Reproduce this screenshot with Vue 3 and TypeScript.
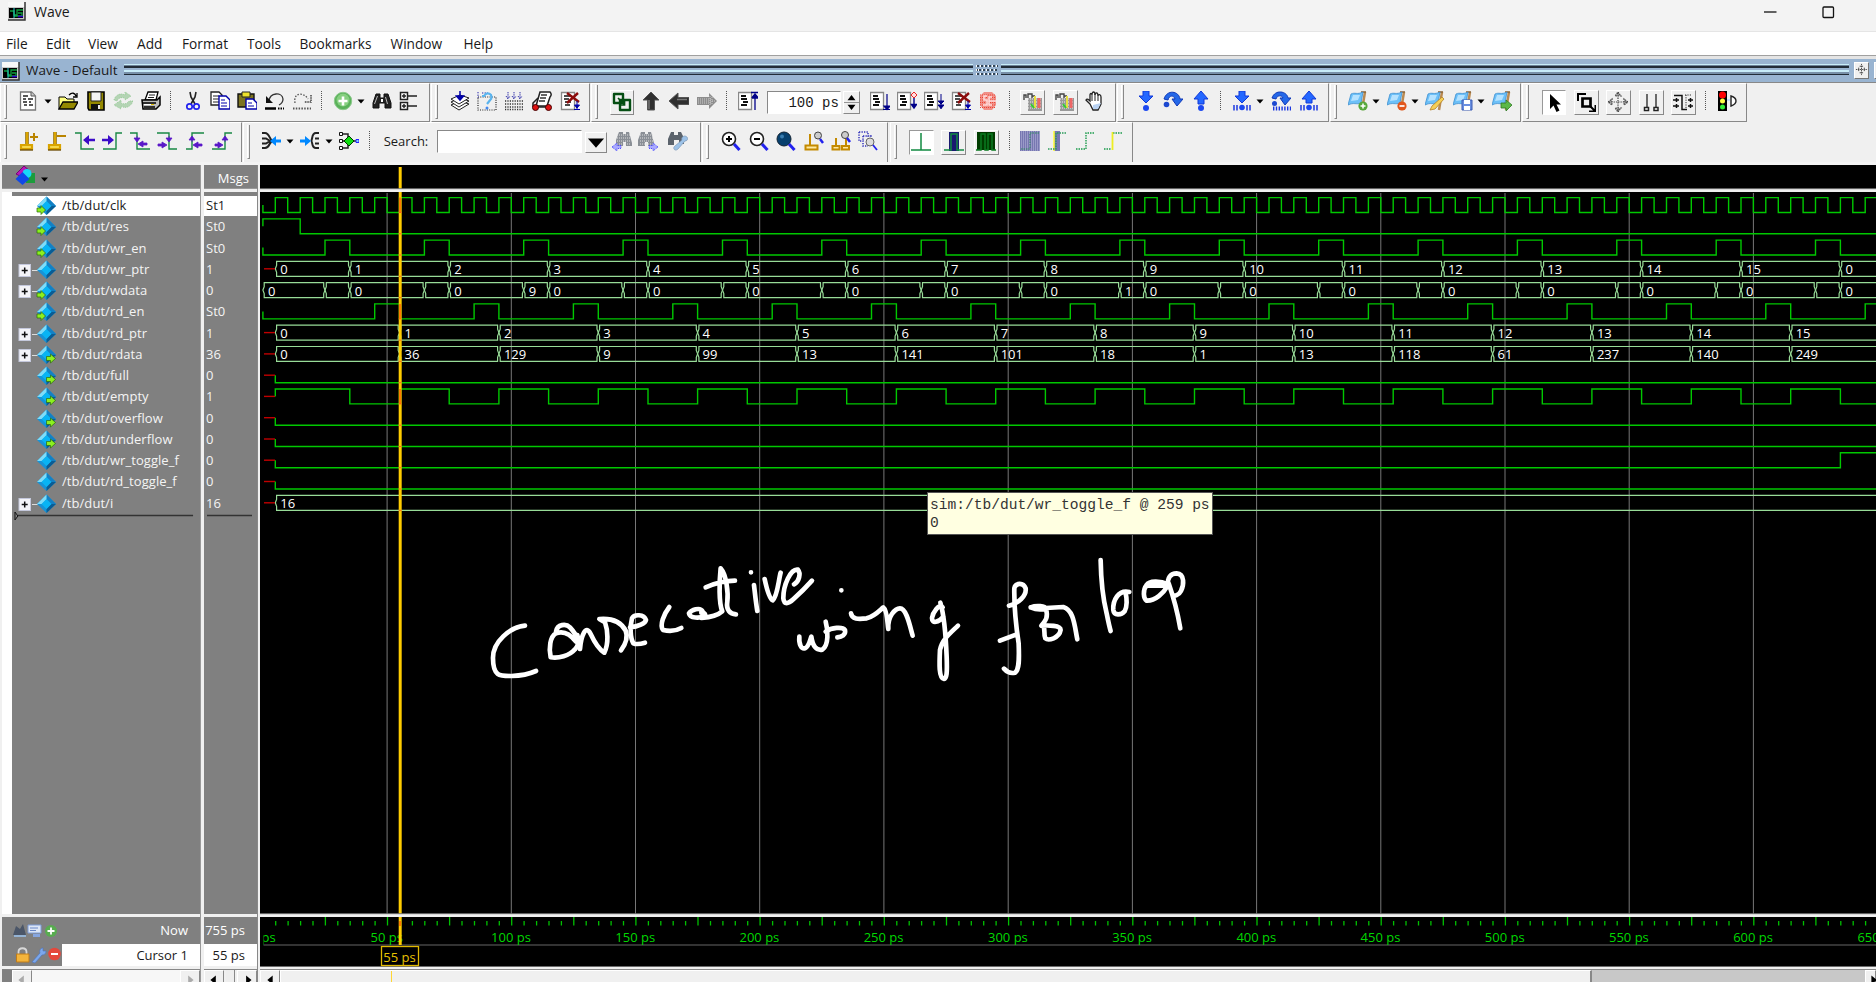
<script setup lang="ts">
type Item = { n: string; c: number; w: number; k?: string }
type Raw = [string, number, number?, string?]

const icons: Record<string, string> = {
  app: '<path d="M1 1h17v18H1z" fill="#c8c8c8"/><path d="M1 1h17v5H1z" fill="#f8f8f8"/><path d="M18 1v18H1" stroke="#333" stroke-width="1.5" fill="none"/><path d="M2 7h14v10H2z" fill="#000"/><path d="M3 10h4v4h3v-5h6M11 12h4v3h-8" stroke="#10a040" fill="none" stroke-width="1.3"/><path d="M7 7v10" stroke="#2cc"/><path d="M11 15.5h5" stroke="#30c" stroke-width="1.5"/>',
  down: '<path d="M6.5 8.500h7L10 12.500z" fill="#000"/>',
  new: '<path d="M2.500 1h11l4 4v14h-15z" fill="#fff" stroke="#777" stroke-width="1.3"/><path d="M13 1v4h4" fill="#ccc" stroke="#555"/><path d="M5 5h5M5 8h3m2 0h5M5 11h4m2 0h2M6 14h3m2 0h4" stroke="#222" stroke-width="1.6"/>',
  open: '<path d="M1 18V6h6l2 2h7v4" fill="#ffff80" stroke="#000"/><path d="M1 18l4-7h15l-4 7z" fill="#948800" stroke="#000" stroke-width="1.3"/><path d="M11 4c3-3 6-2 7 1m1-3v4h-4" stroke="#000" fill="none" stroke-width="1.3"/>',
  save: '<path d="M2 1h16v18H3l-1-2z" fill="#948800" stroke="#000" stroke-width="1.6"/><path d="M5 1h10v9H5z" fill="#f4f4f4" stroke="#222"/><path d="M5 13h9v6H5z" fill="#111"/><path d="M12 14h2v4h-2z" fill="#eee"/>',
  refresh: '<g fill="#b4d4b4" stroke="#9c9" stroke-dasharray="1 1"><path d="M1 9C3 3 8 2 12 4V1l6 4-6 4V7C8 6 5 7 4 10z"/><path d="M20 10c-2 6-8 8-12 5v3l-7-4 7-5v3c4 2 7 0 8-2z"/></g>',
  print: '<path d="M7 1h10l-2 8H4z" fill="#fff" stroke="#000" stroke-width="1.3"/><path d="M8 4h6M7 6.500h6" stroke="#222"/><path d="M1 9h15l3-3v8l-4 4H2z" fill="#bbb" stroke="#000" stroke-width="1.500"/><path d="M2 12h13M3 16h11" stroke="#000" stroke-width="1.5"/><path d="M3 13.500h10" stroke="#fff"/><path d="M10 13.500h3" stroke="#db0"/>',
  cut: '<path d="M7 1l1 5 4 7M13 1l-1 5-4 7" stroke="#222" stroke-width="1.6" fill="none"/><circle cx="6.500" cy="15.500" r="2.700" fill="none" stroke="#22e" stroke-width="1.700"/><circle cx="13.500" cy="15.500" r="2.700" fill="none" stroke="#22e" stroke-width="1.700"/>',
  copy: '<path d="M1 1h8l3 3v10H1z" fill="#fff" stroke="#222" stroke-width="1.300"/><path d="M3 5h6M3 8h6M3 11h6" stroke="#222"/><path d="M9 5h7l4 4v9H9z" fill="#fff" stroke="#00a" stroke-width="1.400"/><path d="M11 9h4M11 12h6M11 15h6" stroke="#00a"/>',
  paste: '<path d="M1 3h16v13H1z" fill="#7d7420" stroke="#111" stroke-width="1.400"/><path d="M5 1h8v5H5z" fill="#eee12c" stroke="#222"/><path d="M9 8h7l4 4v6H9z" fill="#fff" stroke="#00a" stroke-width="1.400"/><path d="M11 12h4M11 15h6" stroke="#00a"/>',
  undo: '<path d="M4 10C5 1 17 1 18 8c0 4-2 5-4 6" stroke="#333" fill="none" stroke-width="1.300"/><path d="M1 5v7h7z" fill="#111"/><path d="M0 17.500h11" stroke="#000" stroke-width="2.500"/><path d="M13 17.500h6" stroke="#000" stroke-width="2" stroke-dasharray="1.5 1"/>',
  redo: '<path d="M3 12C1 1 12 1 16 8" stroke="#555" fill="none" stroke-width="1.300" stroke-dasharray="1.5 1.5"/><path d="M19 4v7h-7" stroke="#444" fill="none" stroke-dasharray="1.500 .8" stroke-width="1.500"/><path d="M1 17.500h18" stroke="#555" stroke-width="1.800" stroke-dasharray="1.5 1.3"/>',
  plus: '<circle cx="10" cy="10" r="8.700" fill="#59b159" stroke="#8cc98c"/><circle cx="10" cy="9" r="6.500" fill="#86cf80"/><path d="M10 5.500v9M5.500 10h9" stroke="#fff" stroke-width="2.600"/>',
  binoc: '<path d="M4 3h4v4h4V3h4l3 9v5h-6v-5H7v5H1v-5z" fill="#222" stroke="#111"/><path d="M5.500 5l-3 8M13.500 6l2 7" stroke="#bbb"/><path d="M9 8h2v3H9z" fill="#fff"/>',
  tree: '<path d="M1.500 1.500h7v7h-7zM1.500 11.500h7v7h-7z" fill="#fff" stroke="#222" stroke-width="1.500"/><path d="M5 3v4M3 5h4M5 13v4M3 15h4M9 5h9M9 15h9" stroke="#222" stroke-width="1.400"/>',
  layers: '<path d="M1 14l9-4 9 3-10 6z" fill="#fff" stroke="#222"/><path d="M1 11l9-4 9 3-10 6z" fill="#fff" stroke="#222"/><path d="M1 8l9-4 9 3-10 6z" fill="#fff" stroke="#222"/><path d="M10 0v8M6.500 5l3.500 4 3.500-4z" stroke="#00a" fill="#00a" stroke-width="1.500"/>',
  dquest: '<path d="M1 6h18v13H1z" fill="none" stroke="#222" stroke-width="1.200" stroke-dasharray="1 1.300"/><path d="M1 1v6M5 2h6" stroke="#22a" stroke-dasharray="1.300 1.300"/><path d="M5 5h3M7 5c3-5 9-2 7 3l-4 5" stroke="#5ab4ee" fill="none" stroke-width="2.200"/><circle cx="10" cy="17" r="1.500" fill="#48e"/>',
  dots: '<path d="M1 10h18M1 13h18M1 16h18M1 18.500h18" stroke="#333" stroke-width="1.300" stroke-dasharray="1.200 1.200"/><path d="M4 1v6M10 1v6M16 1v6M2 5l2 3 2-3M8 5l2 3 2-3M14 5l2 3 2-3" fill="none" stroke="#33a" stroke-dasharray="1.400 .8"/>',
  cart: '<path d="M8 1h10c2 2 1 4 0 5l-3 9H4z" fill="#fff" stroke="#222" stroke-width="1.500"/><path d="M9 4h6M8 7h6M7 10h6" stroke="#333" stroke-width="1.300"/><path d="M1 16v-4l5-5M4 16h12" stroke="#222" stroke-width="1.500" fill="none"/><circle cx="3.500" cy="16.500" r="3" fill="#d11" stroke="#400"/><circle cx="16.500" cy="16.500" r="3" fill="#d11" stroke="#400"/>',
  docx: '<path d="M1.500 1.500h13v17h-13z" fill="#fff" stroke="#888" stroke-width="1.300"/><path d="M4 5h7M4 8h5M5 11h6M5 14h5" stroke="#111" stroke-width="1.700"/><path d="M7 2l12 9M18 2L7 12" stroke="#8b0c0c" stroke-width="2.400"/><path d="M17 10v8M14.500 14l2.500 3 2.500-3zM14 18.500h6" stroke="#00a" fill="#00a"/>',
  link: '<path d="M2 2h9v9H2zM8 8h10v10H8z" fill="none" stroke="#064f14" stroke-width="2.400" stroke-linejoin="round"/><path d="M6 6l6 6M12.500 8v5H8" stroke="#064f14" stroke-width="1.700" fill="none"/>',
  up: '<path d="M10 1l8 8h-4.500v10h-7V9H2z" fill="#303030" stroke="#555"/><path d="M8 9v9" stroke="#777" stroke-width="1.500"/>',
  left: '<path d="M0 10l9-8v4.500h11v7H9V18z" fill="#303030" stroke="#555"/><path d="M8 8.500h10" stroke="#777" stroke-width="1.500"/>',
  right: '<path d="M20 10l-8-8v4H0v8h12v4z" fill="#8c8c8c"/><path d="M1 8h13M1 10h17M1 12h13M13 5v10M15 6v8" stroke="#ccc" stroke-dasharray="1 1"/>',
  doctop: '<path d="M.500 1.500h13v17h-13z" fill="#fff" stroke="#888" stroke-width="1.300"/><path d="M3 5h5M3 8h6M5 11h5M3 14h6" stroke="#111" stroke-width="1.800"/><path d="M17 3v16M13 1.500h7M14 7h6M14.500 6L17 3l2.500 3z" stroke="#008" fill="#008" stroke-width="1.300"/>',
  docrun: '<path d="M.500 1.500h13v17h-13z" fill="#fff" stroke="#888" stroke-width="1.300"/><path d="M3 5h5M3 8h6M5 11h5M3 14h6" stroke="#111" stroke-width="1.800"/><path d="M17 3v15M14 15l3 3.500 3-3.500zM13 18.500h7" stroke="#008" fill="#008" stroke-width="1.200"/>',
  docred: '<path d="M.500 1.500h13v17h-13z" fill="#fff" stroke="#888" stroke-width="1.300"/><path d="M3 5h5M3 8h6M5 11h5M3 14h6" stroke="#111" stroke-width="1.800"/><path d="M17 6v11M14.500 13.500l2.500 3.500 2.500-3.500z" stroke="#008" fill="#008" stroke-width="1.400"/><path d="M17 1l3 3-3 3-3-3z" fill="#fdd" stroke="#e22"/>',
  docall: '<path d="M.500 1.500h13v17h-13z" fill="#fff" stroke="#888" stroke-width="1.300"/><path d="M3 5h5M3 8h6M5 11h5M3 14h6" stroke="#111" stroke-width="1.800"/><path d="M17 3v15M14 10l3 3 3-3zM14 14l3 3.500 3-3.500z" stroke="#008" fill="#008" stroke-width="1"/>',
  stop: '<path d="M6 1h8l4 4v9l-4 5H6l-4-5V5z" fill="#f09088"/><path d="M2 4h16M2 6.500h16M2 9h16M2 11.500h16M2 14h16M2 16.500h16" stroke="#e43" stroke-dasharray="1 1"/><path d="M9 5H6v4h3v5H5M14 6h-3v8h3M11 10h7" stroke="#fdd" fill="none" stroke-width="1.500"/>',
  prof: '<path d="M5 6h14v13H5z" fill="#999"/><path d="M5 7h14M5 10h14M5 13h14M5 16h14" stroke="#eee" stroke-dasharray="1 1"/><path d="M1 8V3h2v3M5 6V2h4v4M9 4h3" stroke="#444" stroke-width="1.400" fill="none"/><path d="M12 4v12" stroke="#e8e040" stroke-width="2"/><path d="M16 6v10" stroke="#e66" stroke-width="3"/><path d="M8 12l3 4" stroke="#3c3" stroke-width="2"/>',
  hand: '<path d="M5 13L1 9c1-2 3 0 4 1V4c0-2 2-2 2 0 0-4 3-4 3 0 0-3 3-3 3 1 0-2 3-2 3 1v7l-3 6H8z" fill="#fff" stroke="#222" stroke-width="1.300"/><path d="M7 4v6M10 3v7M13 5v5" stroke="#222"/><path d="M8 14l8-2-3 6H8z" fill="#b9d2f2"/>',
  stepin: '<path d="M7 0h6v5h4L10 12 3 5h4z" fill="#2468ff" stroke="#1038d8"/><circle cx="10" cy="17" r="3" fill="#1c48f0"/>',
  stepover: '<path d="M1 8C4-2 16 0 17 8h3l-6 7-5-7h3C11 4 6 4 5 9z" fill="#2468e8" stroke="#1038b8"/><circle cx="3.500" cy="13.500" r="2.800" fill="#1c48d0"/>',
  stepout: '<path d="M7 13V8H3l7-8 7 8h-4v5z" fill="#2468ff" stroke="#1038d8"/><circle cx="10" cy="17" r="3" fill="#1c48f0"/>',
  stepin2: '<path d="M7 0h6v5h4L10 12 3 5h4z" fill="#2468ff" stroke="#1038d8"/><circle cx="10" cy="16.500" r="2.800" fill="#1c48f0"/><path d="M2 14v5.500M5 14v5.500M15 14v5.500M18 14v5.500" stroke="#1c38e0" stroke-width="1.500"/>',
  stepover2: '<path d="M1 7C4-2 16 0 17 7h3l-6 7-5-7h3C11 4 6 4 5 8z" fill="#2468e8" stroke="#1038b8"/><circle cx="3.500" cy="12.500" r="2.500" fill="#1c48d0"/><path d="M2 17.500h18" stroke="#1c38e0" stroke-width="4" stroke-dasharray="1.400 1.400"/>',
  stepout2: '<path d="M7 12V8H3l7-8 7 8h-4v4z" fill="#2468ff" stroke="#1038d8"/><circle cx="10" cy="16.500" r="2.800" fill="#1c48f0"/><path d="M2 14v5.500M5 14v5.500M15 14v5.500M18 14v5.500" stroke="#1c38e0" stroke-width="1.500"/>',
  arrow: '<path d="M6 2v15l3.500-3.500 3 6.500 3-1.500-3-6H17z" fill="#000"/>',
  zoomsel: '<path d="M2 9V2h8" stroke="#000" stroke-width="2" fill="none"/><path d="M6.500 6.500h8v8h-8z" fill="none" stroke="#000" stroke-width="2.700"/><path d="M14 14l5 5M19.500 13v6.500H13" stroke="#000" stroke-width="2" fill="none"/>',
  pan: '<path d="M10 1v18M1 10h18M10 0l3 4H7zM10 20l3-4H7zM0 10l4-3v6zM20 10l-4-3v6z" fill="#aaa" stroke="#444" stroke-width="1.200" stroke-dasharray="1.300 1"/>',
  twocur: '<path d="M6 2v14M15 2v14" stroke="#222" stroke-width="1.300"/><path d="M3.500 15.500h4v3h-4zM13 15.500h4v3h-4z" fill="#fff" stroke="#222" stroke-width="1.500"/>',
  editw: '<path d="M1 3.500h8v14h5" stroke="#111" stroke-width="1.500" fill="none"/><path d="M12 3h7M13 16V3" stroke="#333" stroke-dasharray="1.200 1.200"/><path d="M0 8h6M3.500 6v4M15 8h5M17.500 6v4M15 14h5M17.500 12v4M0 14h6M3.500 12v4" stroke="#111" stroke-width="1.500"/>',
  light: '<path d="M1 0h9v20H1z" fill="#000"/><circle cx="5.500" cy="4" r="3.500" fill="#f00"/><circle cx="5.500" cy="10" r="2.500" fill="#ff4"/><circle cx="5.500" cy="16" r="2.500" fill="#3e3"/><path d="M10 9h3" stroke="#9cf"/><path d="M14 5v10c3-1 5-3 5-5s-2-4-5-5z" fill="#fff" stroke="#222" stroke-width="1.400"/>',
  curadd: '<path d="M8 1v13" stroke="#8a6500" stroke-width="3.500"/><path d="M8 1v13M2 14h11v4H2z" stroke="#d9a400" stroke-width="2.200" fill="#f6d84c"/><path d="M1 19h13" stroke="#6a4a00" stroke-width="1.300"/><path d="M11 6h8M15 2v8" stroke="#b98400" stroke-width="2"/>',
  curdel: '<path d="M8 1v13" stroke="#8a6500" stroke-width="3.500"/><path d="M8 1v13M2 14h11v4H2z" stroke="#d9a400" stroke-width="2.200" fill="#f6d84c"/><path d="M1 19h13" stroke="#6a4a00" stroke-width="1.300"/><path d="M10 5h9" stroke="#b98400" stroke-width="2"/>',
  e1: '<path d="M0 2h6v16h13" stroke="#198844" fill="none" stroke-width="1.400"/><path d="M8 9l6-5v3.700h6v2.600h-6V14z" fill="#3c0cc8"/>',
  e2: '<path d="M20 2h-6v16H1" stroke="#198844" fill="none" stroke-width="1.400"/><path d="M12 9L6 4v3.700H0v2.600h6V14z" fill="#3c0cc8"/>',
  e3: '<path d="M0 2h7v16h13" stroke="#198844" fill="none" stroke-width="1.400"/><path d="M7 5v5M4 7l3 4 3-4zM8 13l5-3v2h4v2h-4v2z" fill="#5a18c8" stroke="#5a18c8" stroke-width=".8"/>',
  e4: '<path d="M0 2h12v16h8" stroke="#198844" fill="none" stroke-width="1.400"/><path d="M12 5v5M9 7l3 4 3-4zM10 14l-5-3v2H1v2h4v2z" fill="#5a18c8" stroke="#5a18c8" stroke-width=".8"/>',
  e5: '<path d="M1 18h6V2h12" stroke="#198844" fill="none" stroke-width="1.400"/><path d="M7 11V6M4 9l3-4 3 4zM8 14l5-3v2h4v2h-4v2z" fill="#5a18c8" stroke="#5a18c8" stroke-width=".8"/>',
  e6: '<path d="M0 18h13V2h7" stroke="#198844" fill="none" stroke-width="1.400"/><path d="M13 11V6M10 9l3-4 3 4zM11 14l-5-3v2H3v2h3v2z" fill="#5a18c8" stroke="#5a18c8" stroke-width=".8"/>',
  c1: '<path d="M1 2h3c5 0 4 7 8 8-4 0-3 7-8 7H1M1 7.500h4l4 2.500-4 2.500H1" stroke="#222" fill="none" stroke-width="2"/><path d="M9 10l6-5v3.500h5v3h-5V15z" fill="#08f"/>',
  c2: '<path d="M19 2h-3c-5 0-3 7-5 8 2 0 0 7 5 7h3M19 7.500h-4M19 12.500h-4" stroke="#222" fill="none" stroke-width="2"/><path d="M11 10L5 5v3.500H0v3h5V15z" fill="#08f"/>',
  c3: '<path d="M3 3h6v14H3M3 10h14" stroke="#222" stroke-width="1.500" fill="none"/><path d="M.500 1.500h3v3h-3zM.500 8.500h3v3h-3zM.500 15.500h3v3h-3z" fill="#fff" stroke="#111"/><path d="M10 5l5 5-5 5-5-5z" fill="#1d1" stroke="#030"/><path d="M17 8.500h3v3h-3z" fill="#8cf" stroke="#22f"/>',
  fprev: '<path d="M7 1h4v2h3V1h3l3 11v3h-6v-4h-3v4H4V9z" fill="#8a8f96"/><path d="M5 4h13M5 7h14M5 10h14M5 13h14" stroke="#ddd" stroke-dasharray="1 1"/><path d="M0 16l5-4v2.500h4v3H5V20z" fill="#aaf" stroke="#44f" stroke-dasharray="1 1"/>',
  fnext: '<path d="M3 1h4v2h3V1h3l3 11v3h-6v-4H7v4H0V9z" fill="#8a8f96"/><path d="M2 4h14M2 7h14M2 10h14M2 13h14" stroke="#ddd" stroke-dasharray="1 1"/><path d="M20 16l-5-4v2.500h-4v3h4V20z" fill="#aaf" stroke="#44f" stroke-dasharray="1 1"/>',
  fopt: '<path d="M3 1h3v3h4V1h3l3 6v6h-5V9H6v5H0V8z" fill="#5b636c"/><path d="M17 5c4 1 3 5 0 5l-7 8c-3 3-6-1-3-3l7-6c-1-2 1-4 3-4z" fill="#9cc2e8" stroke="#7f9ab8" stroke-width=".7"/>',
  zin: '<circle cx="8" cy="8" r="6.500" fill="#fff" stroke="#222" stroke-width="1.600"/><path d="M8 5v6M5 8h6" stroke="#000" stroke-width="2"/><path d="M13 13l5.500 6" stroke="#22e" stroke-width="3"/>',
  zout: '<circle cx="8" cy="8" r="6.500" fill="#fff" stroke="#222" stroke-width="1.600"/><path d="M5 8h6" stroke="#000" stroke-width="2"/><path d="M13 13l5.500 6" stroke="#22e" stroke-width="3"/>',
  zfull: '<circle cx="8" cy="8" r="7" fill="#07406e" stroke="#123"/><circle cx="6" cy="5.500" r="2" fill="#3a7db0"/><path d="M13 13l5.500 6" stroke="#22e" stroke-width="3"/>',
  zcur: '<path d="M6 3v11M1.500 14.500h12v4h-12z" stroke="#c48a00" stroke-width="2" fill="#ffe9a0"/><circle cx="14" cy="4.500" r="3.500" fill="#ccc" stroke="#444"/><path d="M16 8l3 4" stroke="#22e" stroke-width="2.500"/>',
  ztwo: '<path d="M5 7v8M15 7v8M1.500 15h7v3.500h-7zM11 15h7v3.500h-7z" stroke="#c48a00" stroke-width="2" fill="#ffe9a0"/><circle cx="14" cy="4" r="3.500" fill="#ccc" stroke="#444"/><path d="M16 7l3 4" stroke="#22e" stroke-width="2.500"/>',
  zrange: '<path d="M1 1h9v4h3M1 1v9h4v5h5M5 5h8v5M5 5v5" stroke="#33b" stroke-dasharray="1.300 1.200" fill="none" stroke-width="1.500"/><circle cx="12" cy="11" r="4" fill="#ddd" stroke="#666"/><path d="M15 14l4 5" stroke="#22e" stroke-width="1.800"/>',
  w1: '<path d="M0 18h20M10 1v17" stroke="#128a42" stroke-width="1.500"/>',
  w2: '<path d="M5 0h10v19H5z" fill="#191970"/><path d="M0 18h7V2h6v16h7" stroke="#128a42" fill="none" stroke-width="1.500"/>',
  w3: '<path d="M1 0h18v18H1z" fill="#003c00"/><path d="M0 18h5V2h4v16h3V2h4v16h4" stroke="#0a7a20" fill="none" stroke-width="1.500"/>',
  w4: '<path d="M0 0h20v20H0z" fill="#9a9ac8"/><path d="M0 1h20M0 3h20M0 5h20M0 7h20M0 9h20M0 11h20M0 13h20M0 15h20M0 17h20M0 19h20" stroke="#55559a" stroke-dasharray="1 1"/><path d="M1 18h9V2h9" stroke="#2a8a5a" fill="none" stroke-dasharray="1.500 1"/>',
  w5: '<path d="M6 0h6v20H6z" fill="#7777b4"/><path d="M6 0v20" stroke="#ff3" stroke-width="1.500"/><path d="M0 18h8V2h10" stroke="#2a9a5a" fill="none" stroke-width="1.400" stroke-dasharray="1.500 1"/>',
  w6: '<path d="M1 18h10V2h9" stroke="#1a9a4a" fill="none" stroke-width="1.400" stroke-dasharray="1.500 1"/>',
  w7: '<path d="M1 18h7M10 2h10" stroke="#1a9a4a" fill="none" stroke-width="1.400" stroke-dasharray="1.500 1"/><path d="M9.500 1v18" stroke="#ee2" stroke-width="1.800"/>'
}
const flag = '<path d="M17 1l-3 18" stroke="#b98a52" stroke-width="2.500"/><path d="M13 1h5" stroke="#8a6234" stroke-width="1.500"/><path d="M3 3c4-2 6 1 12-2l-2 11c-5 2-7-1-13 2z" fill="#6cc0f8" stroke="#3d8fd0" stroke-width=".8"/><path d="M5 4l7 0-2 5-7 1z" fill="#b5e2ff"/>'
icons.b1 = flag + '<circle cx="15" cy="15" r="4.600" fill="#57a83c"/><path d="M15 12.500v5M12.500 15h5" stroke="#fff" stroke-width="1.500"/>'
icons.b2 = flag + '<circle cx="15" cy="15" r="4.600" fill="#e2571c"/><path d="M12.500 15h5" stroke="#fff" stroke-width="1.700"/>'
icons.b3 = flag + '<path d="M17 6l2 2-9 10-5 1 2-4z" fill="#f5cf58" stroke="#b58324" stroke-width=".8"/>'
icons.b4 = flag + '<path d="M9 9h10v10H9z" fill="#6a8fe0" stroke="#3c5cb4"/><path d="M11 9h6v4h-6zM11 15h6v4h-6z" fill="#fff"/>'
icons.b5 = flag + '<path d="M9 12h5V9l6 5-6 6v-3H9z" fill="#5cb848" stroke="#2f7a22" stroke-width=".8"/>'

const bar = (start: number, end: number, raw: Raw[]) => {
  let pos = start + 10
  const items = raw.map(([n, c, w = n === 'down' ? 12 : n === 'sep' ? 2 : 20, k = 'icon']) => {
    const gap = c - w / 2 - pos
    pos = c + w / 2
    return { n, c, w, k: n === 'sep' ? 'sep' : k, gap } as Item & { gap: number }
  })
  return { width: end - start, items }
}
const row1 = [
  bar(0, 430, [['new', 27.500], ['down', 47.500], ['open', 68], ['save', 96], ['refresh', 123], ['print', 150.500], ['sep', 171], ['cut', 192.500], ['copy', 220], ['paste', 247], ['undo', 275], ['redo', 301.500], ['sep', 322], ['plus', 343], ['down', 361], ['binoc', 381.500], ['tree', 408.500]]),
  bar(431, 589.500, [['layers', 460], ['dquest', 487], ['dots', 514], ['cart', 542], ['docx', 569.500]]),
  bar(591, 1116, [['link', 622, 24, 'btn'], ['up', 651.500], ['left', 679.500], ['right', 707], ['sep', 727.500], ['doctop', 748], ['100 ps', 804, 74, 'time'], ['spin', 851.500, 17, 'spin'], ['docrun', 880], ['docred', 907], ['docall', 934], ['docx', 961.500], ['stop', 988], ['sep', 1010], ['prof', 1033, 25, 'btn'], ['prof', 1065.500, 25, 'btn'], ['hand', 1095]]),
  bar(1117, 1328.500, [['stepin', 1146], ['stepover', 1173], ['stepout', 1201], ['sep', 1221], ['stepin2', 1242], ['down', 1259.500, 10], ['stepover2', 1280.500], ['stepout2', 1308.500]]),
  bar(1330, 1521.500, [['b1', 1358], ['down', 1376], ['b2', 1397], ['down', 1415], ['b3', 1435.500], ['b4', 1463], ['down', 1481], ['b5', 1502]]),
  bar(1523, 1747.500, [['arrow', 1554.500, 24, 'btn on'], ['zoomsel', 1587, 25, 'btn'], ['pan', 1619, 25, 'btn'], ['twocur', 1652, 25, 'btn'], ['editw', 1684, 25, 'btn'], ['sep', 1707], ['light', 1727.500]])
]
const row2 = [
  bar(0, 242, [['curadd', 29], ['curdel', 56.500], ['e1', 85], ['e2', 112], ['e3', 140], ['e4', 167], ['e5', 195], ['e6', 222]]),
  bar(243, 701, [['c1', 271], ['down', 290], ['c2', 310], ['down', 329], ['c3', 349], ['sep', 370], ['Search:', 406.500, 46, 'label'], ['', 509.500, 145, 'field'], ['down', 595.500, 22, 'btn drop'], ['fprev', 622], ['fnext', 648], ['fopt', 678]]),
  bar(702, 888, [['zin', 731], ['zout', 759], ['zfull', 786], ['zcur', 814], ['ztwo', 841], ['zrange', 868]]),
  bar(889, 1132, [['w1', 920.500, 25, 'btn on'], ['w2', 953, 25, 'btn'], ['w3', 985.500, 25, 'btn'], ['sep', 1009], ['w4', 1029.500], ['w5', 1057], ['w6', 1084], ['w7', 1112]])
]
const menus = [['File', 40], ['Edit', 42], ['View', 49], ['Add', 45], ['Format', 65], ['Tools', 52.500], ['Bookmarks', 91], ['Window', 73], ['Help', 40]]

// kind: 0 internal, 1 input, 2 output
const signals: { n: string; v: string; kind: number; bus?: boolean }[] = [
  { n: 'clk', v: 'St1', kind: 1 }, { n: 'res', v: 'St0', kind: 1 }, { n: 'wr_en', v: 'St0', kind: 1 },
  { n: 'wr_ptr', v: '1', kind: 0, bus: true }, { n: 'wdata', v: '0', kind: 1, bus: true }, { n: 'rd_en', v: 'St0', kind: 1 },
  { n: 'rd_ptr', v: '1', kind: 0, bus: true }, { n: 'rdata', v: '36', kind: 2, bus: true }, { n: 'full', v: '0', kind: 2 },
  { n: 'empty', v: '1', kind: 2 }, { n: 'overflow', v: '0', kind: 2 }, { n: 'underflow', v: '0', kind: 2 },
  { n: 'wr_toggle_f', v: '0', kind: 0 }, { n: 'rd_toggle_f', v: '0', kind: 0 }, { n: 'i', v: '16', kind: 0, bus: true }
]

const END = 660
const X = (t: number) => +(262.9 + t * 2.4842).toFixed(1)
const hi = (r: number) => +(197.600 + r * 21.270).toFixed(1)
const lo = (r: number) => +(212.500 + r * 21.270).toFixed(1)
const mid = (r: number) => +(205 + r * 21.270).toFixed(1)
const range = (n: number) => Array.from({ length: n }, (_, i) => i)

function bit(row: number, from: number, level: number, edges: number[]) {
  let d = `M${X(from)} ${mid(row)}V${level ? hi(row) : lo(row)}`
  let l = level
  for (const t of edges) {
    l = 1 - l
    d += `H${X(t)}V${l ? hi(row) : lo(row)}`
  }
  return d + `H${X(END)}`
}
const bits = [
  bit(0, 0, 0, range(131).map(i => 5 + i * 5)),
  bit(1, 0, 1, [15]),
  bit(2, 0, 0, range(16).flatMap(i => [25 + 40 * i, 35 + 40 * i])),
  bit(5, 0, 0, range(16).flatMap(i => [45 + 40 * i, 55 + 40 * i])),
  bit(8, 5, 0, []),
  bit(9, 5, 1, range(16).flatMap(i => [35 + 40 * i, 55 + 40 * i]).filter(t => t < 650)),
  bit(10, 5, 0, []), bit(11, 5, 0, []), bit(12, 5, 0, [635]), bit(13, 5, 0, [])
]
type Seg = { row: number; a: number; b: number; v: string }
const segs: Seg[] = []
const addBus = (row: number, pts: [number, string][]) =>
  pts.forEach(([t, v], i) => segs.push({ row, a: t, b: i + 1 < pts.length ? pts[i + 1][0] : END, v }))
addBus(3, [[5, '0'], ...range(16).map(i => [35 + 40 * i, String((i + 1) % 16)] as [number, string])])
addBus(4, [[0, '0'], ...range(16).flatMap(i => [[25 + 40 * i, i === 2 ? '9' : i === 8 ? '1' : ''], [35 + 40 * i, '0']] as [number, string][])])
addBus(6, [[5, '0'], ...range(15).map(i => [55 + 40 * i, String(i + 1)] as [number, string])])
addBus(7, [[5, '0'], ...['36', '129', '9', '99', '13', '141', '101', '18', '1', '13', '118', '61', '237', '140', '249'].map((v, i) => [55 + 40 * i, v] as [number, string])])
addBus(14, [[5, '16']])
const segPath = (s: Seg) => {
  const a = X(s.a), b = X(s.b), h = hi(s.row), l = lo(s.row), m = mid(s.row)
  return `M${a + 1.3} ${h}H${b - 1.3}V${h + 4}L${b} ${m}L${b - 1.3} ${l - 4}V${l}H${a + 1.3}V${l - 4}L${a} ${m}L${a + 1.3} ${h + 4}Z`
}
const unknown = [3, 6, 7, 8, 9, 10, 11, 12, 13, 14]
const grid = range(12).map(i => 50 + i * 50)
const ticks = range(130).map(i => 5 + i * 5)
const labels = range(13).map(i => 50 + i * 50)
</script>

<template>
  <div class="win">
    <header class="titlebar">
      <svg class="ic20" viewBox="0 0 20 20" v-html="icons.app" />
      <span class="wtitle">Wave</span>
      <svg class="winbtns" viewBox="0 0 90 32"><path d="M0 11h12.500" /><rect x="59" y="6" width="10.500" height="10.500" rx="1" /></svg>
    </header>
    <nav class="menu"><span v-for="m in menus" :key="m[0]" :style="{ width: m[1] + 'px' }">{{ m[0] }}</span></nav>
    <div class="pane">
      <svg class="ic20" viewBox="0 0 20 20" v-html="icons.app" />
      <span class="ptitle">Wave - Default</span>
      <div class="grip l" />
      <div class="dots"><i v-for="n in 3" :key="n" /></div>
      <div class="grip r" />
      <div class="pbtn"><svg viewBox="0 0 14 14"><path d="M7 1v12M1 7h12M4 5v4M10 5v4M5 3.500h4M5 10.500h4" stroke="#444" stroke-dasharray="1.500 .7" /></svg></div>
      <div class="pbtn last" />
    </div>
    <div v-for="(row, ri) in [row1, row2]" :key="ri" class="bars">
      <div v-for="(g, gi) in row" :key="gi" class="bar" :style="{ width: g.width + 'px' }">
        <div class="handle" />
        <div v-for="(it, i) in g.items" :key="i" :class="it.k" :style="{ width: it.w + 'px', marginLeft: it.gap + 'px' }">
          <template v-if="it.k === 'time' || it.k === 'label'">{{ it.n }}</template>
          <template v-else-if="it.k === 'spin'">
            <svg viewBox="0 0 17 22"><path d="M4 8.500h9L8.500 2.500zM4 13.500h9l-4.500 6z" /><path d="M0 11h17" stroke="#888" /></svg>
          </template>
          <svg v-else-if="icons[it.n]" class="ic20" viewBox="0 0 20 20" v-html="icons[it.n]" />
        </div>
      </div>
    </div>
    <main class="wave">
      <section class="names">
        <div class="head">
          <svg class="filter" viewBox="0 0 34 24">
            <path d="M2 9l8-8 7 6-3 4-4-4-4 4z" fill="#b818b8" stroke="#707" /><path d="M12 8h9v10h-9z" fill="#1c9c3c" /><circle cx="13" cy="8.500" r="4.500" fill="#18d8f8" /><path d="M8.500 7l7 7-7 6-7-6z" fill="#1048e8" /><path d="M27 12.500h7l-3.500 4z" fill="#000" />
          </svg>
        </div>
        <div class="list">
          <div v-for="(s, i) in signals" :key="s.n" class="sig" :class="{ sel: i === 0 }">
            <svg class="node" viewBox="0 0 46 22">
              <g v-if="s.bus"><path d="M14 11.500h12" stroke="#ddd" /><rect x="1" y="5.500" width="11.500" height="12" fill="#f4f4f8" stroke="#c4c8dc" /><path d="M6.700 8.500v6M3.700 11.500h6" stroke="#111" stroke-width="1.500" /></g>
              <path d="M28.500 1.500L38 11l-9.500 9L19 11z" fill="#1793d6" /><path d="M28.500 1.500L38 11l-5 .5-4.500-5z" fill="#1380c4" /><path d="M38 11l-9.500 9v-4l4.500-5z" fill="#0a5c94" /><path d="M28.500 1.500L19 11h5l4.500-4.500z" fill="#7fdcf8" /><path d="M28.500 6l5 5-5 5-5-5z" fill="#08b4f4" />
              <path v-if="s.kind === 1" d="M19 13h4v-2.500l4.500 4.500-4.500 4.500V17h-4z" fill="#8cf020" stroke="#2a6a0a" stroke-width=".7" />
              <path v-if="s.kind === 2" d="M28.500 12.500h4V10l5 4.500-5 4.500v-2.500h-4z" fill="#8cf020" stroke="#2a6a0a" stroke-width=".7" />
            </svg>
            <span>/tb/dut/{{ s.n }}</span>
          </div>
          <svg class="insert" viewBox="0 0 190 10"><path d="M3 1l3 4-3 4z" fill="none" stroke="#111" /><path d="M6 4.500h177" stroke="#333" stroke-width="1.300" /></svg>
        </div>
        <div class="foot">
          <div class="now">
            <svg viewBox="0 0 50 20"><path d="M1 14L4 5l4 3 3-5 3 11z" fill="#4b5668" /><path d="M2 15h12" stroke="#9bc4f0" stroke-width="1.500" /><path d="M16 4h13v8H16z" fill="#dce6f6" stroke="#7d9cd8" /><path d="M18 7h8M18 9.500h6" stroke="#6a88c8" /><path d="M21 13h7v3h-7z" fill="#86a6e0" /><circle cx="39" cy="10" r="6" fill="#58ac50" /><path d="M39 6.500v7M35.500 10h7" stroke="#fff" stroke-width="1.800" /></svg>
            <span>Now</span>
          </div>
          <div class="cur">
            <svg viewBox="0 0 50 20"><path d="M6.500 10V7c0-5 8-5 8 0v3" fill="none" stroke="#d8d8d8" stroke-width="1.800" /><path d="M4.500 9h12.500v8H4.500z" fill="#f3b43c" stroke="#c07c18" /><path d="M20 17l8-9c-1-3 1-5 3-5v3h3c0 3-2 4-4 4l-7 8z" fill="#7ca8ec" stroke="#4a74c0" stroke-width=".6" /><circle cx="42.500" cy="9" r="6.300" fill="#e4483c" /><path d="M39 9h7" stroke="#fff" stroke-width="2" /></svg>
            <span>Cursor 1</span>
          </div>
        </div>
        <div class="scroll s1"><b class="sb"><svg viewBox="0 0 20 20"><path d="M12 5v10L6 10z" fill="#aaa" /></svg></b><i /><b class="sb"><svg viewBox="0 0 20 20"><path d="M8 5v10l6-5z" fill="#aaa" /></svg></b></div>
      </section>
      <section class="vals">
        <div class="head">Msgs</div>
        <div class="list">
          <div v-for="(s, i) in signals" :key="s.n" class="sig" :class="{ sel: i === 0 }">{{ s.v }}</div>
          <svg class="insert" viewBox="0 0 53 10"><path d="M3 4.500h45" stroke="#333" stroke-width="1.300" /></svg>
        </div>
        <div class="foot"><div class="now">755 ps</div><div class="cur">55 ps</div></div>
        <div class="scroll"><b class="sb"><svg viewBox="0 0 20 20"><path d="M12 5v10L6 10z" /></svg></b><b class="thumb" /><b class="sb"><svg viewBox="0 0 20 20"><path d="M9 5v10l6-5z" /></svg></b></div>
      </section>
      <section class="view">
        <svg class="canvas" viewBox="260 165 1616 804" width="1616" height="804">
          <path class="grid" v-for="t in grid" :key="t" :d="`M${X(t)} 193V914`" />
          <path class="bus" v-for="(s, i) in segs" :key="i" :d="segPath(s)" />
          <path class="bit" v-for="(d, i) in bits" :key="i" :d="d" />
          <path class="x" v-for="r in unknown" :key="r" :d="`M264 ${mid(r)}H275`" />
          <g class="val"><text v-for="(s, i) in segs" :key="i" :x="X(s.a) + 5" :y="mid(s.row) + 5.500">{{ s.v }}</text></g>
          <path d="M260 945h1616" stroke="#666" />
          <path class="tick" v-for="t in ticks" :key="t" :d="`M${X(t) + .4} ${t % 25 ? 921 : 917}V925.500`" />
          <g class="axis"><text v-for="t in labels" :key="t" :x="X(t) - 0.300" y="942">{{ t }} ps</text><text x="268.500" y="942" class="cut">ps</text></g>
          <path d="M260 917v50" stroke="#000" stroke-width="7" />
          <path d="M400.200 167V945" stroke="#ffcc00" stroke-width="3" />
          <path v-for="r in 15" :key="r" :d="`M398.700 ${lo(r - 1)}h3`" stroke="#f06a20" />
          <path :d="`M400 ${hi(0)}V${lo(0)}M400 ${hi(5)}V${lo(5)}M400 ${hi(9)}V${lo(9)}M400 921V926`" stroke="#ff6a00" stroke-width="1.600" />
          <path d="M260 190.500H1876M260 915.500H1876" stroke="#f0f0f0" stroke-width="3" />
          <path d="M260 188.700H1876M260 913.700H1876M260 966.600H1876" stroke="#777" />
          <path d="M260 968.300H1876" stroke="#f0f0f0" stroke-width="2.500" />
          <rect x="381.500" y="946.500" width="37" height="19" fill="#000" stroke="#e0b800" stroke-width="1.300" />
          <text x="399.500" y="962" class="curlab">55 ps</text>
          <g class="ink">
            <g transform="translate(470 530) scale(.3333)">
              <path d="M165 287C120 292 68 335 69 385C69 440 90 438 125 438C155 437 175 433 198 423" />
              <path d="M258 305C262 282 288 280 300 292C325 320 332 340 315 358C298 378 265 386 242 382C236 355 240 320 258 310C285 300 305 318 318 335" />
              <path d="M322 315L330 357C333 320 347 280 362 312C376 342 390 360 403 368C417 340 413 300 405 277L388 267C425 264 453 275 467 302C476 325 465 345 453 361" />
              <path d="M480 292C505 290 526 280 528 270C522 252 492 252 486 265C480 290 480 322 490 340C500 344 512 342 525 338" />
              <path d="M598 231C582 252 568 285 579 300C600 305 618 303 634 294" />
              <path d="M698 244C690 230 664 240 657 250C660 266 690 265 704 258C708 252 700 246 694 248M695 264C725 262 745 255 757 244C746 220 748 155 752 115C770 135 775 190 772 215C768 240 780 252 798 253M707 172C735 160 765 152 795 152" />
              <path d="M843 127h.1M852 165C855 190 858 220 862 243M884 147C890 175 897 205 908 211C922 200 925 155 932 128" />
              <path d="M972 163C988 155 993 130 984 119C962 115 940 165 940 205C942 225 955 222 970 208C990 190 1010 170 1026 152" />
            </g>
            <g transform="translate(800 530) scale(.3333)">
              <path d="M-2 320C-4 345 5 358 15 355C27 350 30 330 34 320C38 350 50 362 67 359C87 345 84 300 77 275M77 305C95 292 128 290 135 300C138 315 125 320 112 322" />
              <path d="M124 181h.1M153 250C155 268 175 268 200 265C225 258 240 240 250 232C262 240 262 280 265 297C262 260 285 235 300 235C320 235 330 290 338 317" />
              <path d="M428 232C418 218 398 248 396 264C396 283 416 277 430 260M421 218C434 260 438 330 440 380C442 430 440 446 432 447C416 445 418 400 420 360C425 330 450 310 474 287" />
              <path d="M627 227C655 220 680 198 677 175C670 156 646 158 643 175C642 230 650 300 656 340C658 390 658 420 645 428C630 432 620 425 612 416M600 332L648 314" />
              <path d="M692 232C710 225 735 228 738 236C724 240 705 238 692 232M738 234L790 231C822 240 824 290 832 328M738 236C745 262 738 270 724 287C745 286 782 285 782 300C778 325 745 333 736 325C730 312 737 300 730 288" />
              <path d="M902 90C903 150 910 210 920 250C925 275 928 290 932 303M988 186C955 178 938 212 940 240C942 258 964 256 974 244C982 230 981 205 977 190" />
              <path d="M1105 163C1080 152 1048 152 1040 165C1028 180 1030 206 1040 212C1066 213 1090 190 1104 166L1042 167M1106 160C1120 200 1135 260 1141 295M1106 163C1100 145 1112 130 1130 130C1155 132 1152 165 1143 183C1136 197 1124 198 1118 195" />
            </g>
          </g>
        </svg>
        <div class="tip">sim:/tb/dut/wr_toggle_f @ 259 ps<br>0</div>
        <div class="scroll s3"><b class="sb"><svg viewBox="0 0 20 20"><path d="M13 5v10L7 10z" /></svg></b><div class="track"><em /></div><b class="sb"><svg viewBox="0 0 20 20"><path d="M6 5v10l6-5z" /></svg></b></div>
      </section>
    </main>
  </div>
</template>

<style>
html, body { margin: 0; overflow: hidden; }
</style>
<style scoped>
.win { width: 1876px; height: 982px; overflow: hidden; display: flex; flex-direction: column; background: #f0f0f0; font-family: "Open Sans", "Noto Sans", sans-serif; color: #1a1a1a; box-sizing: border-box; }
.win * { box-sizing: border-box; }
svg { display: block; flex: none; }
.ic20 { width: 20px; height: 20px; }
.titlebar { height: 31px; flex: none; background: #f3f3f3; display: flex; align-items: flex-start; padding: 1px 0 0 7px; }
.wtitle { font-size: 14px; margin-left: 7px; line-height: 21px; }
.winbtns { width: 90px; height: 32px; margin-left: auto; margin-right: 22px; fill: none; stroke: #111; stroke-width: 1.300; }
.menu { height: 25px; flex: none; background: #fff; border-top: 1px solid #e5e5e5; display: flex; padding-left: 6px; font-size: 13.700px; line-height: 23px; }
.pane { height: 26px; flex: none; background: #99b4d1; display: flex; align-items: center; border-top: 3px solid #e4e4e4; box-shadow: 0 -1px #a0a0a0; padding-left: 1px; }
.pane > * { flex: none; }
.ptitle { font-size: 13.500px; margin-left: 5px; width: 98px; line-height: 20px; margin-top: -2px; white-space: nowrap; }
.grip { height: 11px; margin-top: -2px; border-top: 1px solid #c8ecf8; border-bottom: 1.500px solid #222c38; background: linear-gradient(#6d8298 0 1px, #222c38 1px 3px, #99b4d1 3px 5px, #c8ecf8 5px 7px, #7890a8 7px); }
.grip.l { width: 849px; }
.pane .grip.r { flex: 1; }
.dots { width: 28px; padding: 0 3px; display: flex; flex-direction: column; gap: 2px; margin-top: -2px; }
.dots i { height: 2px; background: repeating-linear-gradient(90deg, #fff 0 1.500px, #345 1.500px 3px, #99b4d1 3px 4px); }
.dots i:nth-child(2) { background-position-x: 2px; }
.pbtn { width: 15px; height: 17px; background: #f0f0f0; border: 1px solid; border-color: #fff #777 #777 #fff; margin-left: 5px; margin-top: -1px; }
.pbtn.last { width: 2px; border-right: 0; }
.bars { height: 40px; flex: none; display: flex; gap: 1.200px; border-top: 1px solid #888; }
.bars + .bars { height: 41px; border-top: 0; }
.bar { flex: none; display: flex; align-items: center; border-right: 1.500px solid #888; border-bottom: 1.500px solid #888; border-top: 1px solid #fff; border-left: 1px solid #fff; padding-bottom: 3px; }
.handle { width: 3px; height: 34px; margin: 1px 3px 0 3px; border-right: 1px solid #888; border-bottom: 1px solid #888; border-left: 1px solid #fff; }
.bar > div { flex: none; }
.icon { display: flex; justify-content: center; }
.sep { height: 20px; background: repeating-linear-gradient(#555 0 1px, transparent 1px 2px) 0 0 / 1px 100% no-repeat; }
.btn { height: 25px; display: flex; align-items: center; justify-content: center; border: 1.500px solid; border-color: #fff #888 #888 #fff; margin-top: 2px; }
.btn.on { border-color: #999 #fff #fff #999; background: #fff; }
.drop { height: 21px; }
.drop .ic20 { transform: scale(2.300); }
.time { height: 23px; margin-top: 2px; background: #fff; border: 1px solid; border-color: #888 #fff #fff #888; font: 14px/22px "Liberation Mono", monospace; text-align: right; padding-right: 1px; white-space: nowrap; }
.spin { height: 23px; margin-top: 2px; border: 1px solid; border-color: #fff #888 #888 #fff; }
.spin svg { width: 15px; height: 21px; }
.label { font-size: 13px; white-space: nowrap; margin-top: -1px; }
.field { height: 23px; background: #fff; border: 1px solid; border-color: #888 #fff #fff #888; }

.wave { flex: 1; display: grid; grid-template-columns: 199px 53px 1616px; column-gap: 3px; padding-left: 2px; background: #f0f0f0; border-top: 3px solid #f4f4f4; margin-top: -1px; min-height: 0; font-size: 13px; }
section { min-width: 0; display: flex; flex-direction: column; }
.vals { border-right: 1px solid #888; width: 54px; }
.names { border-right: 1px solid #999; }
.head { height: 24px; flex: none; background: #808080; border-bottom: 1px solid #999; color: #fff; text-align: right; padding-right: 8px; line-height: 26px; }
.filter { width: 34px; height: 24px; margin-left: 12px; }
.list { height: 722px; flex: none; margin-top: 3px; background: #808080; padding-top: 4px; }
.names .list { border-left: 10px solid #fff; }
.sig { height: 21.270px; display: flex; align-items: flex-start; line-height: 19px; color: #f4f4f4; white-space: nowrap; }
.names .sig span { letter-spacing: .06px; }
.sel span, .vals .sel { color: #222; }
.sel { background: linear-gradient(#fff 20px, transparent 20px); }
.names .sig { padding-left: 6px; }
.vals .sig { padding-left: 2px; }
.node { width: 46px; height: 22px; margin-top: -1px; margin-right: -2px; }
.insert { height: 10px; width: 100%; margin-top: -4px; overflow: visible; }
.foot { height: 49px; flex: none; margin-top: 3px; background: #808080; }
.now { height: 27px; color: #fff; display: flex; justify-content: space-between; line-height: 27px; padding: 0 12px 0 10px; }
.now svg, .cur svg { width: 50px; height: 20px; margin-top: 4px; }
.cur { height: 22px; display: flex; line-height: 22px; padding-left: 10px; }
.cur svg { margin-top: 1px; }
.cur span { flex: 1; background: #fff; text-align: right; padding-right: 12px; }
.vals .now, .vals .cur { padding: 0 12px 0 0; justify-content: flex-end; white-space: nowrap; }
.vals .cur { background: #fff; }
.scroll { flex: 1; margin-top: 3px; display: flex; overflow: hidden; background: #f0f0f0; border-top: 1px solid #888; }
.sb { width: 20px; height: 20px; border: 1.500px solid; border-color: #fff #888 #888 #fff; background: #f0f0f0; flex: none; }
.sb svg { width: 18px; height: 18px; }
.s1 { border-left: 10px solid #808080; }
.s1 i { flex: 1; background: #f7f7f7; }
.thumb { flex: 1; border-right: 1px solid #888; height: 20px; margin: 0 2px; background: #eee; }
.view { position: relative; background: #000; }
.canvas { height: 804px; }
.s3 { margin-top: 0; }
.track { flex: 1; background: #c8c8c8; }
.track em { display: block; width: 1312px; height: 20px; border: solid; border-width: 1px 2px 0 1px; border-color: #fff #888 #888 #fff; background: linear-gradient(90deg, transparent 110px, #ffd633 110px 111.500px, transparent 111.500px) #f0f0f0; }
.s3 .sb:last-child { width: 11px; }
.grid { stroke: #777; stroke-width: 1; }
.bit { fill: none; stroke: #00c800; stroke-width: 1.400; }
.bus { fill: none; stroke: #98dc98; stroke-width: 1.200; }
.x { stroke: #c00000; stroke-width: 1.400; }
.tick { stroke: #00c000; stroke-width: 1.300; }
.val text { fill: #fff; font-size: 13px; }
.axis text { fill: #00d800; font-size: 13px; text-anchor: middle; }
.curlab { fill: #e8c400; font-size: 13px; text-anchor: middle; }
.ink path { fill: none; stroke: #fff; stroke-width: 14; stroke-linecap: round; stroke-linejoin: round; }
.tip { position: absolute; left: 667px; top: 327px; width: 286px; height: 43px; background: #ffffe1; border: 1px solid #555; padding: 3px 2px; font: 14.600px/18px "Liberation Mono", monospace; letter-spacing: -.020px; white-space: nowrap; color: #333; }
</style>
